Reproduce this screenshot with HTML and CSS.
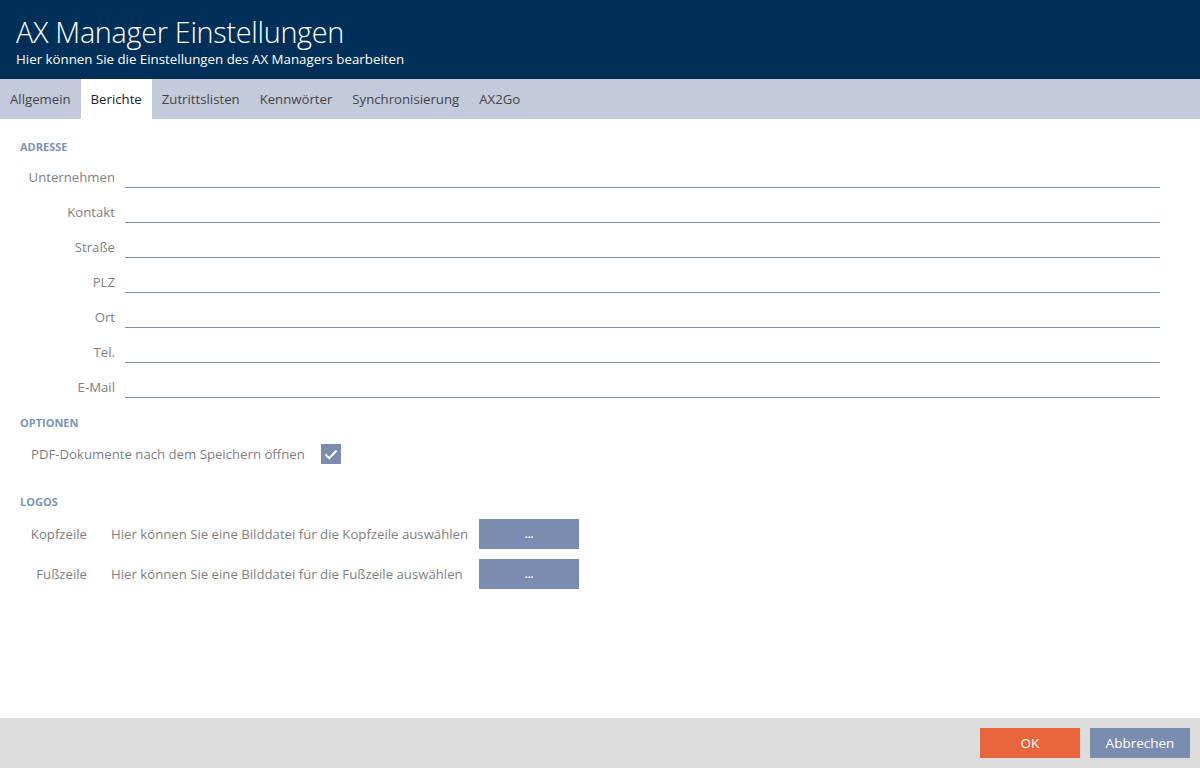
FILE: index.html
```html
<!DOCTYPE html>
<html lang="de">
<head>
<meta charset="utf-8">
<title>AX Manager Einstellungen</title>
<link rel="stylesheet" href="styles.css">
</head>
<body>
<div class="app">
  <header class="header">
    <h1 class="title">AX Manager Einstellungen</h1>
    <p class="subtitle">Hier können Sie die Einstellungen des AX Managers bearbeiten</p>
  </header>
  <nav class="tabs">
    <span class="tab">Allgemein</span>
    <span class="tab active">Berichte</span>
    <span class="tab">Zutrittslisten</span>
    <span class="tab">Kennwörter</span>
    <span class="tab">Synchronisierung</span>
    <span class="tab">AX2Go</span>
  </nav>
  <main class="content">
    <h2 class="section-title">ADRESSE</h2>
    <div class="form-grid">
      <label class="field-label">Unternehmen</label><div class="field-input"></div>
      <label class="field-label">Kontakt</label><div class="field-input"></div>
      <label class="field-label">Straße</label><div class="field-input"></div>
      <label class="field-label">PLZ</label><div class="field-input"></div>
      <label class="field-label">Ort</label><div class="field-input"></div>
      <label class="field-label">Tel.</label><div class="field-input"></div>
      <label class="field-label">E-Mail</label><div class="field-input"></div>
    </div>
    <h2 class="section-title options-title">OPTIONEN</h2>
    <div class="option-row">
      <span class="option-label">PDF-Dokumente nach dem Speichern öffnen</span>
      <span class="checkbox">
        <svg viewBox="0 0 20 20" width="20" height="20"><path d="M4.5 10.5 L8.3 14.2 L15.5 6.5" fill="none" stroke="#fff" stroke-width="2"/></svg>
      </span>
    </div>
    <h2 class="section-title logos-title">LOGOS</h2>
    <div class="logo-grid">
      <span class="logo-label">Kopfzeile</span>
      <span class="logo-desc">Hier können Sie eine Bilddatei für die Kopfzeile auswählen</span>
      <button class="btn-browse">...</button>
      <span class="logo-label">Fußzeile</span>
      <span class="logo-desc">Hier können Sie eine Bilddatei für die Fußzeile auswählen</span>
      <button class="btn-browse">...</button>
    </div>
  </main>
  <footer class="footer">
    <button class="btn btn-ok">OK</button>
    <button class="btn btn-cancel">Abbrechen</button>
  </footer>
</div>
</body>
</html>
```
FILE: styles.css
```css
* { box-sizing: border-box; }
html, body { margin: 0; padding: 0; }
body {
  font-family: "Open Sans", "Noto Sans", sans-serif;
  background: #ffffff;
  color: #666;
}
.app {
  width: 1200px;
  height: 768px;
  display: flex;
  flex-direction: column;
}
.header {
  background: #002f59;
  height: 79px;
  padding: 13px 16px 0;
  color: #fff;
}
.title {
  margin: 0;
  font-weight: 300;
  font-size: 28.8px;
  line-height: 37px;
  letter-spacing: -0.3px;
}
.subtitle {
  margin: 0;
  font-size: 13.3px;
  line-height: 18px;
}
.tabs {
  display: flex;
  height: 40px;
  background: #c3cadb;
}
.tab {
  display: flex;
  align-items: center;
  padding: 0 10px;
  font-size: 13.2px;
  color: #444;
}
.tab.active { background: #fff; color: #222; }
.content {
  flex: 1;
  padding: 20px 40px 0 20px;
}
.section-title {
  margin: 0;
  font-size: 11px;
  font-weight: 700;
  color: #7d93b8;
  line-height: 16px;
}
.form-grid {
  display: grid;
  grid-template-columns: 95px 1fr;
  column-gap: 10px;
  margin-top: -2px;
}
.field-label {
  text-align: right;
  font-size: 13.2px;
  line-height: 20px;
  height: 35px;
  padding-top: 14px;
  color: #7f7f7f;
}
.field-input {
  height: 35px;
  border-bottom: 1px solid #7d90b0;
}
.options-title { margin-top: 17px; }
.option-row {
  display: flex;
  align-items: center;
  gap: 16px;
  padding-left: 11px;
  margin-top: 13px;
}
.option-label { font-size: 13.2px; color: #7f7f7f; }
.checkbox {
  width: 20px;
  height: 20px;
  background: #7a8db0;
  display: inline-block;
}
.checkbox svg { display: block; }
.logos-title { margin-top: 30px; }
.logo-grid {
  display: grid;
  grid-template-columns: 80px auto 100px;
  justify-content: start;
  align-items: center;
  column-gap: 11px;
  row-gap: 10px;
  margin-top: 9px;
}
.logo-label { text-align: right; padding-right: 13px; font-size: 13.2px; color: #7f7f7f; }
.logo-desc { font-size: 13.2px; color: #7f7f7f; }
.btn-browse {
  width: 100px;
  height: 30px;
  border: 0;
  background: #7a8db0;
  color: #fff;
  font-family: inherit;
  font-size: 10px;
  font-weight: 700;
  padding: 0;
}
.footer {
  height: 50px;
  background: #dcdcdc;
  display: flex;
  justify-content: flex-end;
  align-items: center;
  gap: 10px;
  padding-right: 10px;
}
.btn {
  width: 100px;
  height: 30px;
  border: 0;
  color: #fff;
  font-family: inherit;
  font-size: 13.5px;
  padding: 0;
}
.btn-ok { background: #e8643a; }
.btn-cancel { background: #7a8db0; }
```
